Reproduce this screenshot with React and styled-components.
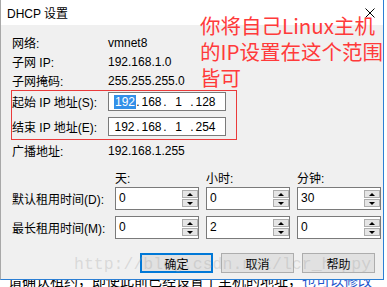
import React from 'react'
import styled, { createGlobalStyle } from 'styled-components'

const GlobalStyle = createGlobalStyle`
  html, body {
    margin: 0;
    padding: 0;
    background: #fff;
    overflow: hidden;
  }
  body {
    font-family: "Liberation Sans", "Noto Sans CJK SC", sans-serif;
    font-size: 12px;
    color: #000;
  }
`

const Page = styled.div`
  position: relative;
  width: 387px;
  height: 287px;
  overflow: hidden;
`

const Window = styled.div`
  width: 384px;
  height: 280px;
  box-sizing: border-box;
  border-left: 1px solid #a8a8a8;
  border-right: 1px solid #2b7fd4;
  border-bottom: 1px solid #2b7fd4;
  background: #f0f0f0;
  display: flex;
  flex-direction: column;
`

const TitleBar = styled.div`
  height: 25px;
  flex: 0 0 25px;
  background: #fff;
  display: flex;
  align-items: center;
  justify-content: space-between;
  padding: 0 8px 0 6px;
`

const Body = styled.div`
  padding: 8px 8px 0 10px;
  display: flex;
  flex-direction: column;
`

const InfoRow = styled.div`
  display: grid;
  grid-template-columns: 96px auto;
  height: 19px;
  align-items: center;
  padding-left: 1px;
  margin-top: ${p => p.$gap || 0}px;
`

const RedBox = styled.div`
  width: 226px;
  box-sizing: border-box;
  border: 1px solid #ea3b3b;
  padding: 1px 10px 3px 0;
  display: grid;
  grid-template-columns: 96px 118px;
  grid-auto-rows: 19px;
  row-gap: 6px;
  align-items: center;
`

const IpBox = styled.div`
  height: 19px;
  box-sizing: border-box;
  border: 1px solid #7a7a7a;
  background: #fff;
  display: flex;
  align-items: center;
  padding-left: 5px;
`

const Field = styled.span`
  width: 21px;
  text-align: center;
`

const Dot = styled.span`
  width: 6px;
  text-align: center;
`

const Selected = styled.span`
  background: #3390e8;
  color: #fff;
  padding: 0 1px;
`

const LeaseGrid = styled.div`
  display: grid;
  grid-template-columns: 96px 84px 84px 84px;
  column-gap: 7px;
  align-items: center;
  padding-left: 1px;
  margin-top: ${p => p.$gap || 0}px;
`

const HeaderRow = styled(LeaseGrid)`
  height: 19px;
`

const SpinRow = styled(LeaseGrid)`
  height: 23px;
`

const SpinBox = styled.div`
  height: 23px;
  box-sizing: border-box;
  border: 1px solid #7a7a7a;
  background: #fff;
  display: flex;
`

const SpinValue = styled.div`
  flex: 1;
  padding: 3px 0 0 3px;
  line-height: 14px;
`

const Spinner = styled.div`
  width: 16px;
  display: flex;
  flex-direction: column;
  gap: 1px;
  padding: 2px 0 2px 0;
`

const SpinBtn = styled.div`
  height: 8px;
  box-sizing: border-box;
  border: 1px solid #adadad;
  background: #e5e5e5;
  display: flex;
  align-items: center;
  justify-content: center;

  &::after {
    content: "";
    width: 0;
    height: 0;
    border-left: 3px solid transparent;
    border-right: 3px solid transparent;
    ${p => p.$down
      ? 'border-top: 3px solid #000;'
      : 'border-bottom: 3px solid #000;'}
  }
`

const ButtonRow = styled.div`
  display: flex;
  justify-content: flex-end;
  gap: 8px;
  margin-top: 14px;
`

const Button = styled.div`
  width: 73px;
  height: 20px;
  box-sizing: border-box;
  display: flex;
  align-items: center;
  justify-content: center;
  background: #e1e1e1;
  border: ${p => p.$primary ? '2px solid #0078d7' : '1px solid #adadad'};
`

const Note = styled.div`
  position: absolute;
  left: 200px;
  top: 12px;
  font-family: "Noto Sans CJK SC", sans-serif;
  font-size: 20.5px;
  line-height: 26px;
  color: #ff3a3a;
  white-space: nowrap;
`

const Watermark = styled.div`
  position: absolute;
  left: 74px;
  top: 255px;
  font-family: "Liberation Mono", monospace;
  font-size: 16.5px;
  color: rgba(160, 160, 160, 0.3);
  white-space: nowrap;
  pointer-events: none;
`

const Strip = styled.div`
  height: 7px;
  overflow: hidden;
  padding-left: 8px;
  font-family: "Noto Sans CJK SC", sans-serif;
  font-size: 14px;
  line-height: 18px;
`

const StripText = styled.div`
  margin-top: -9px;
  white-space: nowrap;

  span { color: #2255cc; }
`

const CloseIcon = () => (
  <svg width="10" height="10" viewBox="0 0 10 10">
    <path d="M0.5 0.5 L9.5 9.5 M9.5 0.5 L0.5 9.5" stroke="#000" strokeWidth="1" fill="none" />
  </svg>
)

const IpInput = ({ parts, selectFirst }) => (
  <IpBox>
    {parts.map((p, i) => (
      <React.Fragment key={i}>
        {i > 0 && <Dot>.</Dot>}
        <Field>{i === 0 && selectFirst ? <Selected>{p}</Selected> : p}</Field>
      </React.Fragment>
    ))}
  </IpBox>
)

const Spin = ({ value }) => (
  <SpinBox>
    <SpinValue>{value}</SpinValue>
    <Spinner>
      <SpinBtn />
      <SpinBtn $down />
    </Spinner>
  </SpinBox>
)

const App = () => {
  return (
    <>
      <GlobalStyle />
      <Page>
        <Window>
          <TitleBar>
            <span>DHCP 设置</span>
            <CloseIcon />
          </TitleBar>
          <Body>
            <InfoRow><span>网络:</span><span>vmnet8</span></InfoRow>
            <InfoRow><span>子网 IP:</span><span>192.168.1.0</span></InfoRow>
            <InfoRow><span>子网掩码:</span><span>255.255.255.0</span></InfoRow>
            <RedBox>
              <span>起始 IP 地址(S):</span>
              <IpInput parts={['192', '168', '1', '128']} selectFirst />
              <span>结束 IP 地址(E):</span>
              <IpInput parts={['192', '168', '1', '254']} />
            </RedBox>
            <InfoRow $gap={1}><span>广播地址:</span><span>192.168.1.255</span></InfoRow>
            <HeaderRow $gap={8}>
              <span />
              <span>天:</span>
              <span>小时:</span>
              <span>分钟:</span>
            </HeaderRow>
            <SpinRow>
              <span>默认租用时间(D):</span>
              <Spin value="0" />
              <Spin value="0" />
              <Spin value="30" />
            </SpinRow>
            <SpinRow $gap={6}>
              <span>最长租用时间(M):</span>
              <Spin value="0" />
              <Spin value="2" />
              <Spin value="0" />
            </SpinRow>
            <ButtonRow>
              <Button $primary>确定</Button>
              <Button>取消</Button>
              <Button>帮助</Button>
            </ButtonRow>
          </Body>
        </Window>
        <Strip>
          <StripText>请确认租约，即使此前已经设置了主机的地址，<span>也可以修改</span></StripText>
        </Strip>
        <Note>
          你将自己Linux主机<br />
          的IP设置在这个范围<br />
          皆可
        </Note>
        <Watermark>http://blog.csdn.net/lcr_happy</Watermark>
      </Page>
    </>
  )
}

export default App
